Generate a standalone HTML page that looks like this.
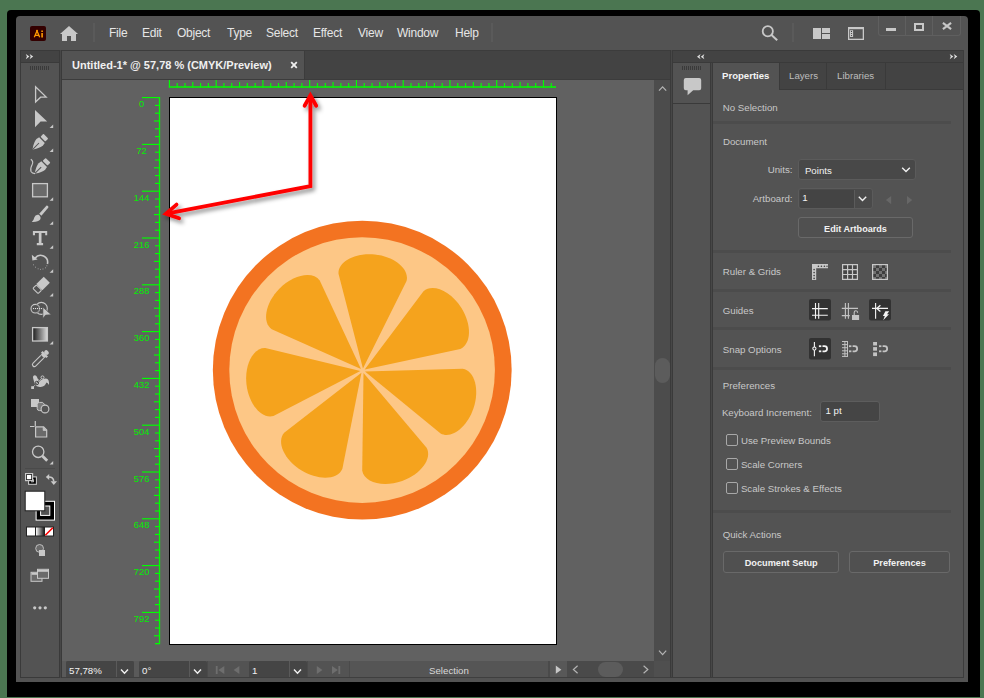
<!DOCTYPE html>
<html><head><meta charset="utf-8">
<style>
*{margin:0;padding:0;box-sizing:border-box}
html,body{width:984px;height:698px;overflow:hidden;background:#4b7651;font-family:"Liberation Sans",sans-serif}
.a{position:absolute}
#frame{left:7px;top:10px;width:973px;height:687px;background:#000;border-radius:4px 4px 0 0}
#win{left:16px;top:16px;width:952px;height:666px;background:#535353;border-radius:4px 4px 0 0;overflow:hidden}
.menu{top:15.8px;height:34px;font-size:12px;letter-spacing:-0.25px;color:#e6e6e6;line-height:34px}
.g{background:#434343}
svg{position:absolute;overflow:visible}
.t{line-height:12px;white-space:nowrap}
</style></head><body>
<div id="frame" class="a"></div>
<div id="win" class="a"></div>

<!-- MENU BAR -->
<div class="a" style="left:30px;top:26px;width:16px;height:15px;background:#330000;border-radius:2px"></div>
<svg style="left:30px;top:26px" width="16" height="15" viewBox="0 0 16 15">
 <path d="M4.3 11.2 L7 5 L9.7 11.2 M4.6 9.3 H9.4" stroke="#ff9a00" stroke-width="1.3" fill="none"/>
 <rect x="11.3" y="7" width="1.6" height="4.5" fill="#ff9a00"/><rect x="11.3" y="4.5" width="1.6" height="1.5" fill="#ff9a00"/><rect x="6.2" y="4" width="1.6" height="1.5" fill="#ff9a00"/>
</svg>
<svg style="left:59px;top:25px" width="20" height="17" viewBox="0 0 20 17">
 <path d="M1 9 L10 1 L19 9 L17 9 L17 16 L12 16 L12 11 L8 11 L8 16 L3 16 L3 9 Z" fill="#c8c8c8"/>
</svg>
<div class="a" style="left:93px;top:23px;width:2px;height:19.4px;background:#5a5a5a"></div>

<!-- menu items -->
<div class="a" style="left:491px;top:23px;width:2px;height:19.4px;background:#5a5a5a"></div>
<div class="a menu" style="left:109px">File</div>
<div class="a menu" style="left:142px">Edit</div>
<div class="a menu" style="left:177px">Object</div>
<div class="a menu" style="left:227px">Type</div>
<div class="a menu" style="left:266px">Select</div>
<div class="a menu" style="left:313px">Effect</div>
<div class="a menu" style="left:358px">View</div>
<div class="a menu" style="left:397px">Window</div>
<div class="a menu" style="left:455px">Help</div>
<!-- right menu icons -->
<svg style="left:760px;top:24px" width="20" height="18" viewBox="0 0 20 18">
 <circle cx="7.8" cy="7.2" r="5.1" stroke="#c8c8c8" stroke-width="1.8" fill="none"/>
 <path d="M11.5 11 L17.2 16.2" stroke="#c8c8c8" stroke-width="2" />
</svg>
<div class="a" style="left:792px;top:23px;width:2px;height:19.4px;background:#5a5a5a"></div>
<div class="a" style="left:813px;top:28px;width:8px;height:11px;background:#c8c8c8"></div>
<div class="a" style="left:822px;top:28px;width:8px;height:4.5px;background:#c8c8c8"></div>
<div class="a" style="left:822px;top:34px;width:8px;height:5px;background:#c8c8c8"></div>
<svg style="left:848px;top:27px" width="16" height="13" viewBox="0 0 16 13">
 <rect x="0.65" y="0.8" width="14.7" height="11.55" stroke="#c8c8c8" stroke-width="1.3" fill="none"/>
 <rect x="0" y="0" width="16" height="2.2" fill="#c8c8c8"/>
 <rect x="2" y="3.2" width="3.1" height="6.8" fill="#c8c8c8"/>
 <circle cx="3.5" cy="4.4" r="0.6" fill="#3a3a3a"/><circle cx="3.5" cy="6.5" r="0.6" fill="#3a3a3a"/><circle cx="3.5" cy="8.5" r="0.6" fill="#3a3a3a"/>
</svg>
<!-- window buttons -->
<div class="a" style="left:878px;top:16px;width:83px;height:20px;border:1px solid #5f5f5f;border-top:none;border-radius:0 0 3px 3px"></div>
<div class="a" style="left:905px;top:16px;width:1px;height:19px;background:#5f5f5f"></div>
<div class="a" style="left:932px;top:16px;width:1px;height:19px;background:#5f5f5f"></div>
<div class="a" style="left:886px;top:28px;width:10px;height:3px;background:#c8c8c8"></div>
<div class="a" style="left:914px;top:23px;width:10px;height:8px;border:2px solid #c8c8c8"></div>
<svg style="left:942px;top:22px" width="10" height="8" viewBox="0 0 10 8">
 <path d="M0.9 0.9 L9.1 7.1 M9.1 0.9 L0.9 7.1" stroke="#c8c8c8" stroke-width="2.1"/>
</svg>

<!-- TOOLBAR PANEL -->
<div class="a" style="left:20px;top:50px;width:42px;height:628px;background:#3a3a3a"></div>
<div class="a" style="left:60px;top:50px;width:1px;height:628px;background:#474747"></div>
<div class="a" style="left:21px;top:51px;width:38px;height:11px;background:#434343"></div>
<div class="a" style="left:21px;top:63px;width:38px;height:614px;background:#535353"></div>


<svg style="left:0;top:0" width="984" height="698" viewBox="0 0 984 698">
 <path d="M25.8 54 L29.400000000000002 56.6 L25.8 59.2 L26.900000000000002 56.6 Z" fill="#e0e0e0"/><path d="M29.6 54 L33.2 56.6 L29.6 59.2 L30.700000000000003 56.6 Z" fill="#e0e0e0"/>
 <g transform="translate(30 66)"><rect x="0" y="0" width="1" height="4" fill="#3a3a3a"/><rect x="2" y="0" width="1" height="4" fill="#3a3a3a"/><rect x="4" y="0" width="1" height="4" fill="#3a3a3a"/><rect x="6" y="0" width="1" height="4" fill="#3a3a3a"/><rect x="8" y="0" width="1" height="4" fill="#3a3a3a"/><rect x="10" y="0" width="1" height="4" fill="#3a3a3a"/><rect x="12" y="0" width="1" height="4" fill="#3a3a3a"/><rect x="14" y="0" width="1" height="4" fill="#3a3a3a"/><rect x="16" y="0" width="1" height="4" fill="#3a3a3a"/><rect x="18" y="0" width="1" height="4" fill="#3a3a3a"/></g>
 <path d="M35.6 86.8 V102 L40.6 97.2 L46.2 97.1 Z" stroke="#c8c8c8" stroke-width="1.3" fill="none" stroke-linejoin="miter"/>
 <path d="M35 110 V127.3 L40.6 121.6 L47.2 121.4 Z" fill="#c8c8c8"/>
 <path d="M53.2 124.4 V128.0 H49.6 Z" fill="#c8c8c8"/>
 <g transform="translate(45.7 136.3) rotate(45)"><rect x="-3.4" y="-0.2" width="6.8" height="4.2" rx="0.8" fill="#c8c8c8"/><path d="M-4 5.3 H4 L4.6 8.5 Q4.3 12.5 0.3 18.2 L-0.3 18.2 Q-4.3 12.5 -4.6 8.5 Z" fill="#c8c8c8"/><path d="M0 9.5 V18" stroke="#535353" stroke-width="1"/></g>
 <path d="M53.2 148.5 V152.1 H49.6 Z" fill="#c8c8c8"/>
 <g transform="translate(47.9 160.4) rotate(45)"><rect x="-3.4" y="-0.2" width="6.8" height="4.2" rx="0.8" fill="#c8c8c8"/><path d="M-4 5.3 H4 L4.6 8.5 Q4.3 12.5 0.3 18.2 L-0.3 18.2 Q-4.3 12.5 -4.6 8.5 Z" fill="#c8c8c8"/><path d="M0 9.5 V18" stroke="#535353" stroke-width="1"/></g>
 <path d="M30.8 159.2 Q33.8 161.5 32.2 164.5 Q30 168.5 31 171.5 Q32 173.6 35 173.6" stroke="#c8c8c8" stroke-width="1.1" fill="none"/>
 <rect x="32.6" y="183.6" width="14.8" height="13.2" fill="#6a6a6a" stroke="#c8c8c8" stroke-width="1.3"/>
 <path d="M53.2 197.2 V200.79999999999998 H49.6 Z" fill="#c8c8c8"/>
 <path d="M46.6 205.6 Q48.8 205.6 48.4 207.6 L41.4 215.8 L39.2 213.8 Z" fill="#c8c8c8"/>
 <path d="M38.8 214.8 Q41.5 217 40.2 219.6 Q38.2 222.2 31.8 221.9 Q34 219.6 34.4 217.2 Q35.4 214 38.8 214.8 Z" fill="#c8c8c8"/>
 <path d="M53.2 221.2 V224.79999999999998 H49.6 Z" fill="#c8c8c8"/>
 <path d="M32.9 230.9 H47.2 V235.2 H45.2 V233 H41.5 V243 H43.1 V245.2 H36.8 V243 H38.8 V233 H35 V235.2 H32.9 Z" fill="#c8c8c8"/>
 <path d="M53.2 245.2 V248.79999999999998 H49.6 Z" fill="#c8c8c8"/>
 <path d="M35 258.2 A7 7 0 0 1 47.4 264" stroke="#c8c8c8" stroke-width="1.6" fill="none"/>
 <path d="M31.8 254.8 L32.4 260.4 L37.6 259.4 Z" fill="#c8c8c8"/>
 <path d="M33.3 264.8 L33.9 264.8 M35.2 267.2 L35.8 267.2 M37.8 268.8 L38.4 268.8 M40.3 269.4 L40.9 269.4 M42.7 269 L43.3 269 M45 267.8 L45.6 267.8 M46.6 265.8 L47.2 265.8" stroke="#c8c8c8" stroke-width="1" fill="none"/>
 <path d="M53.2 269.2 V272.8 H49.6 Z" fill="#c8c8c8"/>
 <g transform="translate(41 285.5) rotate(45)">
  <rect x="-4.3" y="-8.2" width="8.6" height="10.5" fill="#c8c8c8"/>
  <rect x="-3.7" y="2.8" width="7.4" height="5" rx="1" fill="none" stroke="#c8c8c8" stroke-width="1.1"/>
 </g>
 <path d="M53.2 293 V296.6 H49.6 Z" fill="#c8c8c8"/>
 <circle cx="41.3" cy="308.4" r="6" stroke="#c8c8c8" stroke-width="1.1" fill="none"/>
 <circle cx="35.3" cy="308.7" r="4.3" stroke="#c8c8c8" stroke-width="1.1" fill="#535353"/>
 <path d="M36.6 304.6 A4.3 4.3 0 0 1 36.6 312.8" stroke="#8a8a8a" stroke-width="1" fill="none"/>
 <g fill="#e0e0e0"><rect x="33" y="308" width="1.1" height="1.1"/><rect x="35" y="308" width="1.1" height="1.1"/><rect x="37" y="308" width="1.1" height="1.1"/><rect x="39" y="308" width="1.1" height="1.1"/><rect x="41" y="308" width="1.1" height="1.1"/></g>
 <path d="M42.9 307.2 V318.4 L45.6 315.1 L51.2 314.7 Z" fill="#c8c8c8" stroke="#535353" stroke-width="0.6"/>
 <defs><linearGradient id="gr" x1="0" x2="1" y1="0" y2="0"><stop offset="0" stop-color="#1a1a1a"/><stop offset="1" stop-color="#dcdcdc"/></linearGradient>
 <linearGradient id="gr2" x1="0" x2="1" y1="0" y2="0"><stop offset="0" stop-color="#fff"/><stop offset="0.35" stop-color="#aaa"/><stop offset="1" stop-color="#222"/></linearGradient></defs>
 <rect x="32.6" y="327.6" width="14.8" height="13.4" fill="url(#gr)" stroke="#c8c8c8" stroke-width="1.3"/>
 <path d="M53.2 341 V344.6 H49.6 Z" fill="#c8c8c8"/>
 <g transform="translate(40.5 358.5) rotate(45)">
  <rect x="-2.5" y="-10.5" width="5" height="4" rx="2" fill="#c8c8c8"/>
  <rect x="-3.8" y="-6.8" width="7.6" height="2.4" fill="#c8c8c8"/>
  <rect x="-2.4" y="-5" width="4.8" height="2.2" fill="#c8c8c8"/>
  <path d="M-2 -2.5 V8.5 Q-2 10.6 0 10.6 Q2 10.6 2 8.5 V-2.5" stroke="#c8c8c8" stroke-width="1.1" fill="none"/>
 </g>
 <path d="M33.2 378.4 Q32.4 375.4 35 375.2 Q36.8 375.3 37.2 377.6 Q37.6 379.8 39.6 380 Q42 379.6 44.2 378.8 Q47.4 377.6 48.6 380.4 Q49.4 382.6 48.8 385 Q48 382.4 46.4 382.4 Q45 386.4 40.8 386.9 Q36.6 387.3 35 384.8 Q34 381.6 33.2 378.4 Z" fill="#c8c8c8"/>
 <path d="M32.6 387.6 L42.4 377.6" stroke="#535353" stroke-width="1.4"/>
 <path d="M32.6 387.6 L42.4 377.6" stroke="#c8c8c8" stroke-width="0.7"/>
 <circle cx="36.8" cy="383" r="1.75" fill="#c8c8c8" stroke="#3a3a3a" stroke-width="0.9"/>
 <path d="M35.9 383.9 L37.7 382.1" stroke="#3a3a3a" stroke-width="0.8"/>
 <circle cx="42.5" cy="377.4" r="1.5" fill="#535353" stroke="#c8c8c8" stroke-width="1"/>
 <rect x="31.2" y="386.2" width="2.8" height="2.8" fill="#c8c8c8"/>
 <rect x="31" y="399" width="8" height="8" fill="#c8c8c8"/>
 <path d="M37.2 404.5 Q37.2 402.4 39.4 402.4 H42.6 L44.6 404.4 V410.6 H39.6 Q37.2 410.6 37.2 408.4 Z" fill="#7a7a7a" stroke="#c8c8c8" stroke-width="1"/>
 <circle cx="45" cy="409" r="3.9" fill="#535353" stroke="#c8c8c8" stroke-width="1.1"/>
 <path d="M35.3 421 V426 M30 426.5 H34.5" stroke="#c8c8c8" stroke-width="1.2"/>
 <path d="M35.6 426.9 H43.6 L46.7 430 V437 H35.6 Z" fill="#6a6a6a" stroke="#c8c8c8" stroke-width="1.2"/>
 <path d="M43.2 427 V430.4 H46.6" fill="#c8c8c8" stroke="#c8c8c8" stroke-width="0.8"/>
 <circle cx="38.2" cy="451.8" r="5.7" fill="none" stroke="#c8c8c8" stroke-width="1.3"/>
 <path d="M42.4 456 L47.2 460.8" stroke="#c8c8c8" stroke-width="2.8"/>
 <path d="M53.2 461 V464.6 H49.6 Z" fill="#c8c8c8"/>
 <path d="M25 468.5 H55" stroke="#4a4a4a" stroke-width="1"/>
 <rect x="28.6" y="476.9" width="7.8" height="7.4" fill="#000" stroke="#c8c8c8" stroke-width="1.1"/>
 <path d="M33.6 479.3 V481.8 H31" stroke="#fff" stroke-width="0.8" fill="none"/>
 <rect x="25.6" y="473.6" width="7" height="7" fill="#000" stroke="#c8c8c8" stroke-width="1.2"/>
 <rect x="26.9" y="474.9" width="4.4" height="4.4" fill="#fff"/>
 <path d="M48 477 Q53.5 476.5 53.8 481.5" stroke="#c8c8c8" stroke-width="1.6" fill="none"/>
 <path d="M45.8 477 L49.2 473.9 L49.2 480.1 Z" fill="#c8c8c8"/>
 <path d="M50.6 481.2 L57 481.2 L53.8 485 Z" fill="#c8c8c8"/>
 <rect x="36.1" y="501.3" width="18.4" height="18.8" fill="#000" stroke="#fff" stroke-width="1"/>
 <rect x="40.6" y="506" width="9.2" height="9.4" fill="#535353" stroke="#fff" stroke-width="1"/>
 <rect x="25.2" y="491.2" width="19.6" height="19.6" fill="#fff" stroke="#222" stroke-width="1"/>
 <rect x="26" y="526.5" width="28" height="10" fill="#222"/>
 <rect x="27" y="527.5" width="8" height="8" fill="#fff"/>
 <rect x="36" y="527.5" width="8" height="8" fill="url(#gr2)"/>
 <rect x="45" y="527.5" width="8" height="8" fill="#fff"/>
 <path d="M45.3 535.3 L52.8 527.7" stroke="#f00" stroke-width="1.6"/>
 <circle cx="39.6" cy="548.4" r="3.9" fill="#6a6a6a" stroke="#c8c8c8" stroke-width="0.9"/>
 <rect x="39" y="550" width="6" height="6" fill="#c8c8c8"/>
 <rect x="31" y="572.3" width="11" height="9" fill="#6a6a6a" stroke="#c8c8c8" stroke-width="1"/>
 <rect x="31.5" y="572.8" width="10" height="2" fill="#c8c8c8"/>
 <rect x="37.5" y="569.3" width="11" height="9" fill="#6a6a6a" stroke="#c8c8c8" stroke-width="1"/>
 <rect x="38" y="569.8" width="10" height="2" fill="#c8c8c8"/>
 <circle cx="34.7" cy="607.8" r="1.6" fill="#c8c8c8"/><circle cx="40" cy="607.8" r="1.6" fill="#c8c8c8"/><circle cx="45.3" cy="607.8" r="1.6" fill="#c8c8c8"/>
</svg>

<!-- TAB BAR -->
<div class="a" style="left:62px;top:50px;width:610px;height:30px;background:#3c3c3c"></div>
<div class="a" style="left:62px;top:51px;width:242px;height:28px;background:#535353"></div>
<div class="a" style="left:305px;top:51px;width:367px;height:28px;background:#434343"></div>
<div class="a" style="left:72px;top:51px;height:28px;line-height:28px;font-size:11px;font-weight:bold;color:#f0f0f0">Untitled-1* @ 57,78 % (CMYK/Preview)</div>
<svg style="left:290px;top:61px" width="8" height="8" viewBox="0 0 8 8">
 <path d="M1.2 1.2 L6.8 6.8 M6.8 1.2 L1.2 6.8" stroke="#f0f0f0" stroke-width="1.8"/>
</svg>

<!-- CANVAS -->
<div class="a" style="left:62px;top:80px;width:592px;height:581px;background:#616161"></div>
<div class="a" style="left:654px;top:80px;width:16px;height:581px;background:#4c4c4c"></div>
<div class="a" style="left:670px;top:50px;width:3px;height:632px;background:#3c3c3c"></div>
<div class="a" style="left:655px;top:358px;width:15px;height:25px;background:#5c5c5c;border-radius:7.5px"></div>
<!-- artboard -->
<div class="a" style="left:169px;top:97px;width:388px;height:548px;background:#fff;border:1px solid #000"></div>

<svg style="left:0;top:0" width="984" height="698"><path d="M168.8 87 H556" stroke="#00ff00" stroke-width="1.4"/><path d="M169.40 80 V87.5" stroke="#00ff00" stroke-width="1.15"/><path d="M177.19 83 V87.5" stroke="#00ff00" stroke-width="1.15"/><path d="M184.99 83 V87.5" stroke="#00ff00" stroke-width="1.15"/><path d="M192.78 82 V87.5" stroke="#00ff00" stroke-width="1.15"/><path d="M200.57 83 V87.5" stroke="#00ff00" stroke-width="1.15"/><path d="M208.37 83 V87.5" stroke="#00ff00" stroke-width="1.15"/><path d="M216.16 80 V87.5" stroke="#00ff00" stroke-width="1.15"/><path d="M223.95 83 V87.5" stroke="#00ff00" stroke-width="1.15"/><path d="M231.75 83 V87.5" stroke="#00ff00" stroke-width="1.15"/><path d="M239.54 82 V87.5" stroke="#00ff00" stroke-width="1.15"/><path d="M247.33 83 V87.5" stroke="#00ff00" stroke-width="1.15"/><path d="M255.13 83 V87.5" stroke="#00ff00" stroke-width="1.15"/><path d="M262.92 80 V87.5" stroke="#00ff00" stroke-width="1.15"/><path d="M270.71 83 V87.5" stroke="#00ff00" stroke-width="1.15"/><path d="M278.51 83 V87.5" stroke="#00ff00" stroke-width="1.15"/><path d="M286.30 82 V87.5" stroke="#00ff00" stroke-width="1.15"/><path d="M294.09 83 V87.5" stroke="#00ff00" stroke-width="1.15"/><path d="M301.89 83 V87.5" stroke="#00ff00" stroke-width="1.15"/><path d="M309.68 80 V87.5" stroke="#00ff00" stroke-width="1.15"/><path d="M317.47 83 V87.5" stroke="#00ff00" stroke-width="1.15"/><path d="M325.27 83 V87.5" stroke="#00ff00" stroke-width="1.15"/><path d="M333.06 82 V87.5" stroke="#00ff00" stroke-width="1.15"/><path d="M340.85 83 V87.5" stroke="#00ff00" stroke-width="1.15"/><path d="M348.65 83 V87.5" stroke="#00ff00" stroke-width="1.15"/><path d="M356.44 80 V87.5" stroke="#00ff00" stroke-width="1.15"/><path d="M364.23 83 V87.5" stroke="#00ff00" stroke-width="1.15"/><path d="M372.03 83 V87.5" stroke="#00ff00" stroke-width="1.15"/><path d="M379.82 82 V87.5" stroke="#00ff00" stroke-width="1.15"/><path d="M387.61 83 V87.5" stroke="#00ff00" stroke-width="1.15"/><path d="M395.41 83 V87.5" stroke="#00ff00" stroke-width="1.15"/><path d="M403.20 80 V87.5" stroke="#00ff00" stroke-width="1.15"/><path d="M410.99 83 V87.5" stroke="#00ff00" stroke-width="1.15"/><path d="M418.79 83 V87.5" stroke="#00ff00" stroke-width="1.15"/><path d="M426.58 82 V87.5" stroke="#00ff00" stroke-width="1.15"/><path d="M434.37 83 V87.5" stroke="#00ff00" stroke-width="1.15"/><path d="M442.17 83 V87.5" stroke="#00ff00" stroke-width="1.15"/><path d="M449.96 80 V87.5" stroke="#00ff00" stroke-width="1.15"/><path d="M457.75 83 V87.5" stroke="#00ff00" stroke-width="1.15"/><path d="M465.55 83 V87.5" stroke="#00ff00" stroke-width="1.15"/><path d="M473.34 82 V87.5" stroke="#00ff00" stroke-width="1.15"/><path d="M481.13 83 V87.5" stroke="#00ff00" stroke-width="1.15"/><path d="M488.93 83 V87.5" stroke="#00ff00" stroke-width="1.15"/><path d="M496.72 80 V87.5" stroke="#00ff00" stroke-width="1.15"/><path d="M504.51 83 V87.5" stroke="#00ff00" stroke-width="1.15"/><path d="M512.31 83 V87.5" stroke="#00ff00" stroke-width="1.15"/><path d="M520.10 82 V87.5" stroke="#00ff00" stroke-width="1.15"/><path d="M527.89 83 V87.5" stroke="#00ff00" stroke-width="1.15"/><path d="M535.69 83 V87.5" stroke="#00ff00" stroke-width="1.15"/><path d="M543.48 80 V87.5" stroke="#00ff00" stroke-width="1.15"/><path d="M551.27 83 V87.5" stroke="#00ff00" stroke-width="1.15"/><path d="M159.5 97 V644.3" stroke="#00ff00" stroke-width="1.3"/><path d="M142 97.60 H159.5" stroke="#00ff00" stroke-width="1.15"/><path d="M155 105.40 H159.5" stroke="#00ff00" stroke-width="1.15"/><path d="M155 113.20 H159.5" stroke="#00ff00" stroke-width="1.15"/><path d="M154 121.00 H159.5" stroke="#00ff00" stroke-width="1.15"/><path d="M155 128.80 H159.5" stroke="#00ff00" stroke-width="1.15"/><path d="M155 136.60 H159.5" stroke="#00ff00" stroke-width="1.15"/><path d="M142 144.40 H159.5" stroke="#00ff00" stroke-width="1.15"/><path d="M155 152.20 H159.5" stroke="#00ff00" stroke-width="1.15"/><path d="M155 160.00 H159.5" stroke="#00ff00" stroke-width="1.15"/><path d="M154 167.80 H159.5" stroke="#00ff00" stroke-width="1.15"/><path d="M155 175.60 H159.5" stroke="#00ff00" stroke-width="1.15"/><path d="M155 183.40 H159.5" stroke="#00ff00" stroke-width="1.15"/><path d="M142 191.20 H159.5" stroke="#00ff00" stroke-width="1.15"/><path d="M155 199.00 H159.5" stroke="#00ff00" stroke-width="1.15"/><path d="M155 206.80 H159.5" stroke="#00ff00" stroke-width="1.15"/><path d="M154 214.60 H159.5" stroke="#00ff00" stroke-width="1.15"/><path d="M155 222.40 H159.5" stroke="#00ff00" stroke-width="1.15"/><path d="M155 230.20 H159.5" stroke="#00ff00" stroke-width="1.15"/><path d="M142 238.00 H159.5" stroke="#00ff00" stroke-width="1.15"/><path d="M155 245.80 H159.5" stroke="#00ff00" stroke-width="1.15"/><path d="M155 253.60 H159.5" stroke="#00ff00" stroke-width="1.15"/><path d="M154 261.40 H159.5" stroke="#00ff00" stroke-width="1.15"/><path d="M155 269.20 H159.5" stroke="#00ff00" stroke-width="1.15"/><path d="M155 277.00 H159.5" stroke="#00ff00" stroke-width="1.15"/><path d="M142 284.80 H159.5" stroke="#00ff00" stroke-width="1.15"/><path d="M155 292.60 H159.5" stroke="#00ff00" stroke-width="1.15"/><path d="M155 300.40 H159.5" stroke="#00ff00" stroke-width="1.15"/><path d="M154 308.20 H159.5" stroke="#00ff00" stroke-width="1.15"/><path d="M155 316.00 H159.5" stroke="#00ff00" stroke-width="1.15"/><path d="M155 323.80 H159.5" stroke="#00ff00" stroke-width="1.15"/><path d="M142 331.60 H159.5" stroke="#00ff00" stroke-width="1.15"/><path d="M155 339.40 H159.5" stroke="#00ff00" stroke-width="1.15"/><path d="M155 347.20 H159.5" stroke="#00ff00" stroke-width="1.15"/><path d="M154 355.00 H159.5" stroke="#00ff00" stroke-width="1.15"/><path d="M155 362.80 H159.5" stroke="#00ff00" stroke-width="1.15"/><path d="M155 370.60 H159.5" stroke="#00ff00" stroke-width="1.15"/><path d="M142 378.40 H159.5" stroke="#00ff00" stroke-width="1.15"/><path d="M155 386.20 H159.5" stroke="#00ff00" stroke-width="1.15"/><path d="M155 394.00 H159.5" stroke="#00ff00" stroke-width="1.15"/><path d="M154 401.80 H159.5" stroke="#00ff00" stroke-width="1.15"/><path d="M155 409.60 H159.5" stroke="#00ff00" stroke-width="1.15"/><path d="M155 417.40 H159.5" stroke="#00ff00" stroke-width="1.15"/><path d="M142 425.20 H159.5" stroke="#00ff00" stroke-width="1.15"/><path d="M155 433.00 H159.5" stroke="#00ff00" stroke-width="1.15"/><path d="M155 440.80 H159.5" stroke="#00ff00" stroke-width="1.15"/><path d="M154 448.60 H159.5" stroke="#00ff00" stroke-width="1.15"/><path d="M155 456.40 H159.5" stroke="#00ff00" stroke-width="1.15"/><path d="M155 464.20 H159.5" stroke="#00ff00" stroke-width="1.15"/><path d="M142 472.00 H159.5" stroke="#00ff00" stroke-width="1.15"/><path d="M155 479.80 H159.5" stroke="#00ff00" stroke-width="1.15"/><path d="M155 487.60 H159.5" stroke="#00ff00" stroke-width="1.15"/><path d="M154 495.40 H159.5" stroke="#00ff00" stroke-width="1.15"/><path d="M155 503.20 H159.5" stroke="#00ff00" stroke-width="1.15"/><path d="M155 511.00 H159.5" stroke="#00ff00" stroke-width="1.15"/><path d="M142 518.80 H159.5" stroke="#00ff00" stroke-width="1.15"/><path d="M155 526.60 H159.5" stroke="#00ff00" stroke-width="1.15"/><path d="M155 534.40 H159.5" stroke="#00ff00" stroke-width="1.15"/><path d="M154 542.20 H159.5" stroke="#00ff00" stroke-width="1.15"/><path d="M155 550.00 H159.5" stroke="#00ff00" stroke-width="1.15"/><path d="M155 557.80 H159.5" stroke="#00ff00" stroke-width="1.15"/><path d="M142 565.60 H159.5" stroke="#00ff00" stroke-width="1.15"/><path d="M155 573.40 H159.5" stroke="#00ff00" stroke-width="1.15"/><path d="M155 581.20 H159.5" stroke="#00ff00" stroke-width="1.15"/><path d="M154 589.00 H159.5" stroke="#00ff00" stroke-width="1.15"/><path d="M155 596.80 H159.5" stroke="#00ff00" stroke-width="1.15"/><path d="M155 604.60 H159.5" stroke="#00ff00" stroke-width="1.15"/><path d="M142 612.40 H159.5" stroke="#00ff00" stroke-width="1.15"/><path d="M155 620.20 H159.5" stroke="#00ff00" stroke-width="1.15"/><path d="M155 628.00 H159.5" stroke="#00ff00" stroke-width="1.15"/><path d="M154 635.80 H159.5" stroke="#00ff00" stroke-width="1.15"/><path d="M155 643.60 H159.5" stroke="#00ff00" stroke-width="1.15"/><path d="M155 643.6 H159.5" stroke="#00ff00" stroke-width="1.15"/><g fill="#00f000" font-size="9.3" font-family="Liberation Sans"><text x="141.6" y="107.20" text-anchor="middle">0</text><text x="141.6" y="154.00" text-anchor="middle">72</text><text x="141.6" y="200.80" text-anchor="middle">144</text><text x="141.6" y="247.60" text-anchor="middle">216</text><text x="141.6" y="294.40" text-anchor="middle">288</text><text x="141.6" y="341.20" text-anchor="middle">360</text><text x="141.6" y="388.00" text-anchor="middle">432</text><text x="141.6" y="434.80" text-anchor="middle">504</text><text x="141.6" y="481.60" text-anchor="middle">576</text><text x="141.6" y="528.40" text-anchor="middle">648</text><text x="141.6" y="575.20" text-anchor="middle">720</text><text x="141.6" y="622.00" text-anchor="middle">792</text></g></svg>
<svg style="left:0;top:0" width="984" height="698">
<circle cx="362.25" cy="370.1" r="149.4" fill="#f37321"/>
<circle cx="362.1" cy="370.1" r="132.8" fill="#fdc786"/>
<g transform="translate(362.7 370.8)" fill="#f5a31d"><path d="M0 -2.4 L-34.2 -94 C-36.2 -106 -20 -117 0 -117 C20 -117 36.2 -106 34.2 -94 Z" transform="rotate(6.000)"/><path d="M0 -2.4 L-34.2 -94 C-36.2 -106 -20 -117 0 -117 C20 -117 36.2 -106 34.2 -94 Z" transform="rotate(57.429)"/><path d="M0 -2.4 L-34.2 -94 C-36.2 -106 -20 -117 0 -117 C20 -117 36.2 -106 34.2 -94 Z" transform="rotate(108.857)"/><path d="M0 -2.4 L-34.2 -94 C-36.2 -106 -20 -117 0 -117 C20 -117 36.2 -106 34.2 -94 Z" transform="rotate(160.286)"/><path d="M0 -2.4 L-34.2 -94 C-36.2 -106 -20 -117 0 -117 C20 -117 36.2 -106 34.2 -94 Z" transform="rotate(211.714)"/><path d="M0 -2.4 L-34.2 -94 C-36.2 -106 -20 -117 0 -117 C20 -117 36.2 -106 34.2 -94 Z" transform="rotate(263.143)"/><path d="M0 -2.4 L-34.2 -94 C-36.2 -106 -20 -117 0 -117 C20 -117 36.2 -106 34.2 -94 Z" transform="rotate(314.571)"/></g>
</svg>
<svg style="left:0;top:0" width="984" height="698">
<defs><filter id="sh" x="-20%" y="-20%" width="140%" height="140%"><feDropShadow dx="2.5" dy="3" stdDeviation="2.2" flood-color="#000" flood-opacity="0.45"/></filter></defs>
<g filter="url(#sh)" stroke="#ff0000" stroke-width="3.8" fill="none" stroke-linecap="round" stroke-linejoin="miter">
<path d="M310.4 96 V186.2 L166.5 213.6"/>
<path d="M304.6 105.8 L310.4 95.4 L316.2 105.8"/>
<path d="M176.5 204.6 L165.9 213.7 L179.1 218.3"/>
</g>
</svg>
<!-- STATUS BAR -->
<div class="a" style="left:62px;top:661px;width:608px;height:21px;background:#535353"></div>
<div class="a" style="left:62px;top:677px;width:608px;height:1px;background:#3f3f3f"></div>
<div class="a" style="left:62px;top:661px;width:4px;height:16px;background:#5a5a5a"></div>
<div class="a" style="left:66px;top:661px;width:68px;height:16px;background:#454545;border-radius:2px 2px 0 0"></div>
<div class="a" style="left:116px;top:661px;width:1px;height:16px;background:#5a5a5a"></div>
<div class="a" style="left:134px;top:661px;width:5px;height:16px;background:#5a5a5a"></div>
<div class="a" style="left:139px;top:661px;width:68px;height:16px;background:#454545;border-radius:2px 2px 0 0"></div>
<div class="a" style="left:189px;top:661px;width:1px;height:16px;background:#5a5a5a"></div>
<div class="a" style="left:207px;top:661px;width:42px;height:16px;background:#535353;border-left:1px solid #4a4a4a"></div>
<div class="a" style="left:249px;top:661px;width:58px;height:16px;background:#454545;border-radius:2px 2px 0 0"></div>
<div class="a" style="left:289px;top:661px;width:1px;height:16px;background:#5a5a5a"></div>
<div class="a" style="left:307px;top:661px;width:42px;height:16px;background:#535353;border-left:1px solid #4a4a4a"></div>
<div class="a" style="left:349px;top:661px;width:199px;height:16px;background:#555555;border-left:1px solid #4a4a4a"></div>
<div class="a" style="left:548px;top:661px;width:2px;height:16px;background:#4a4a4a"></div>
<div class="a" style="left:550px;top:661px;width:17px;height:16px;background:#585858"></div>
<div class="a" style="left:567px;top:661px;width:87px;height:16px;background:#4a4a4a"></div>
<div class="a" style="left:598px;top:661.5px;width:25px;height:15px;background:#5c5c5c;border-radius:8px"></div>
<div class="a" style="left:654px;top:661px;width:16px;height:16px;background:#4f4f4f"></div>
<div class="a st" style="left:69px;top:663px;font-size:9.7px;color:#f2f2f2;line-height:15px">57,78%</div>
<div class="a st" style="left:142px;top:663px;font-size:9.7px;color:#f2f2f2;line-height:15px">0°</div>
<div class="a st" style="left:252px;top:663px;font-size:9.7px;color:#f2f2f2;line-height:15px">1</div>
<div class="a st" style="left:429px;top:663px;font-size:9.7px;color:#d8d8d8;line-height:15px">Selection</div>
<svg style="left:0;top:0" width="984" height="698">
 <g stroke="#f0f0f0" stroke-width="1.5" fill="none">
  <path d="M121 669.6 L124.5 673.2 L128 669.6"/>
  <path d="M194 669.6 L197.5 673.2 L201 669.6"/>
  <path d="M294 669.6 L297.5 673.2 L301 669.6"/>
 </g>
 <g fill="#6e6e6e">
  <rect x="215.8" y="666" width="1.8" height="8"/><path d="M224.3 666 V674 L218.4 670 Z"/>
  <path d="M239.4 666 V674 L233.6 670 Z"/>
  <path d="M316.8 666 V674 L322.4 670 Z"/>
  <path d="M332 666 V674 L337.8 670 Z"/><rect x="338.4" y="666" width="1.8" height="8"/>
 </g>
 <path d="M555.8 665.6 V673.8 L561.4 669.7 Z" fill="#c8c8c8"/>
 <g stroke="#b4b4b4" stroke-width="1.2" fill="none">
  <path d="M577.6 665.8 L573.4 669.5 L577.6 673.2"/>
  <path d="M643.6 665.8 L647.8 669.5 L643.6 673.2"/>
  <path d="M659 650.6 L662.6 654.6 L666.2 650.6"/>
  <path d="M659 90.6 L662.6 86.8 L666.2 90.6"/>
 </g>
</svg>
<!-- RIGHT DOCK -->
<div class="a" style="left:670px;top:50px;width:298px;height:628px;background:#3a3a3a"></div>
<div class="a" style="left:671px;top:50px;width:1px;height:628px;background:#474747"></div>
<div class="a" style="left:711px;top:63px;width:1px;height:615px;background:#474747"></div>
<div class="a" style="left:673px;top:51px;width:290px;height:11px;background:#434343"></div>
<div class="a" style="left:963px;top:50px;width:5px;height:632px;background:#535353;border-left:1px solid #3c3c3c"></div>
<div class="a" style="left:673px;top:63px;width:37px;height:40px;background:#535353"></div>
<div class="a" style="left:673px;top:104px;width:37px;height:573px;background:#535353"></div>
<div class="a" style="left:670px;top:677px;width:294px;height:1px;background:#3c3c3c"></div>
<div class="a" style="left:670px;top:678px;width:298px;height:4px;background:#535353"></div>
<div class="a" style="left:713px;top:63px;width:250px;height:614px;background:#535353"></div>
<div class="a" style="left:779px;top:63px;width:184px;height:26px;background:#434343"></div>
<div class="a" style="left:779px;top:63px;width:1px;height:26px;background:#3a3a3a"></div>
<div class="a" style="left:826px;top:63px;width:1px;height:26px;background:#3a3a3a"></div>
<div class="a" style="left:885px;top:63px;width:1px;height:26px;background:#3a3a3a"></div>
<div class="a" style="left:779px;top:89px;width:184px;height:1px;background:#3a3a3a"></div>
<svg style="left:0;top:0" width="984" height="698">
 <path d="M700.6 54.1 L697.0 56.7 L700.6 59.300000000000004 L699.5 56.7 Z" fill="#e0e0e0"/><path d="M704.4 54.1 L700.8 56.7 L704.4 59.300000000000004 L703.3 56.7 Z" fill="#e0e0e0"/>
 <path d="M949.7 54 L953.3000000000001 56.6 L949.7 59.2 L950.8000000000001 56.6 Z" fill="#e0e0e0"/><path d="M953.7 54 L957.3000000000001 56.6 L953.7 59.2 L954.8000000000001 56.6 Z" fill="#e0e0e0"/>
 <g fill="#3a3a3a"><rect x="682" y="66" width="1" height="4"/><rect x="684" y="66" width="1" height="4"/><rect x="686" y="66" width="1" height="4"/><rect x="688" y="66" width="1" height="4"/><rect x="690" y="66" width="1" height="4"/><rect x="692" y="66" width="1" height="4"/><rect x="694" y="66" width="1" height="4"/><rect x="696" y="66" width="1" height="4"/><rect x="698" y="66" width="1" height="4"/><rect x="700" y="66" width="1" height="4"/></g>
 <path d="M685.8 78 H699.2 Q701.2 78 701.2 80 V88.2 Q701.2 90.2 699.2 90.2 H693.2 L687.6 95.2 V90.2 H685.8 Q683.8 90.2 683.8 88.2 V80 Q683.8 78 685.8 78 Z" fill="#c8c8c8"/>
</svg>
<div class="a lb" style="left:722px;top:63px;height:26px;line-height:25px;font-size:9.6px;font-weight:bold;color:#f4f4f4">Properties</div>
<div class="a lb" style="left:789px;top:63px;height:26px;line-height:25px;font-size:9.7px;color:#bdbdbd">Layers</div>
<div class="a lb" style="left:837px;top:63px;height:26px;line-height:25px;font-size:9.7px;color:#bdbdbd">Libraries</div>
<div class="a t" style="left:722.8px;top:101.6px;font-size:9.7px;color:#c8c8c8;">No Selection</div>
<div class="a" style="left:713px;top:121px;width:238px;height:3px;background:#4c4c4c"></div>
<div class="a t" style="left:722.9px;top:136.4px;font-size:9.7px;color:#c8c8c8;">Document</div>
<div class="a t" style="right:191.5px;top:164.2px;font-size:9.7px;color:#c8c8c8;">Units:</div>
<div class="a t" style="right:191.5px;top:193.4px;font-size:9.7px;color:#c8c8c8;">Artboard:</div>
<div class="a" style="left:798px;top:159px;width:118px;height:21px;background:#484848;border:1.5px solid #5b5b5b;border-radius:3px"></div>
<div class="a t" style="left:804.9px;top:164.8px;font-size:9.7px;color:#f2f2f2;">Points</div>
<div class="a" style="left:798px;top:188px;width:75px;height:21px;background:#4a4a4a;border:1.5px solid #5b5b5b;border-radius:3px"></div>
<div class="a" style="left:799.5px;top:189.5px;width:54.5px;height:18px;background:#444444;border-radius:2px 0 0 2px"></div>
<div class="a" style="left:854px;top:189.5px;width:1px;height:18px;background:#5b5b5b"></div>
<div class="a t" style="left:802.3px;top:192.4px;font-size:9.7px;color:#f2f2f2;">1</div>
<div class="a" style="left:798px;top:217px;width:115px;height:21px;background:#505050;border:1.5px solid #696969;border-radius:3px"></div>
<div class="a t" style="left:755.5px;width:200px;text-align:center;top:222.5px;font-size:9.1px;color:#f2f2f2;font-weight:bold;">Edit Artboards</div>
<div class="a" style="left:713px;top:250px;width:238px;height:3px;background:#4c4c4c"></div>
<div class="a t" style="left:722.8px;top:266.3px;font-size:9.7px;color:#c8c8c8;">Ruler &amp; Grids</div>
<div class="a" style="left:713px;top:289px;width:238px;height:3px;background:#4c4c4c"></div>
<div class="a t" style="left:722.8px;top:305.4px;font-size:9.7px;color:#c8c8c8;">Guides</div>
<div class="a" style="left:713px;top:327px;width:238px;height:3px;background:#4c4c4c"></div>
<div class="a t" style="left:722.8px;top:344.0px;font-size:9.7px;color:#c8c8c8;">Snap Options</div>
<div class="a" style="left:713px;top:367px;width:238px;height:3px;background:#4c4c4c"></div>
<div class="a t" style="left:722.8px;top:379.9px;font-size:9.7px;color:#c8c8c8;">Preferences</div>
<div class="a t" style="left:721.9px;top:406.6px;font-size:9.7px;color:#c8c8c8;">Keyboard Increment:</div>
<div class="a" style="left:819.5px;top:400.8px;width:60.5px;height:21px;background:#454545;border:1.5px solid #5d5d5d;border-radius:3px"></div>
<div class="a t" style="left:825.5px;top:405.2px;font-size:9.7px;color:#f2f2f2;">1 pt</div>
<div class="a" style="left:726px;top:434px;width:12px;height:12px;border:1.2px solid #a8a8a8;border-radius:2px"></div>
<div class="a t" style="left:740.9px;top:434.8px;font-size:9.7px;color:#c8c8c8;">Use Preview Bounds</div>
<div class="a" style="left:726px;top:458px;width:12px;height:12px;border:1.2px solid #a8a8a8;border-radius:2px"></div>
<div class="a t" style="left:740.9px;top:458.8px;font-size:9.7px;color:#c8c8c8;">Scale Corners</div>
<div class="a" style="left:726px;top:482px;width:12px;height:12px;border:1.2px solid #a8a8a8;border-radius:2px"></div>
<div class="a t" style="left:740.9px;top:482.8px;font-size:9.7px;color:#c8c8c8;">Scale Strokes &amp; Effects</div>
<div class="a" style="left:713px;top:510px;width:238px;height:3px;background:#4c4c4c"></div>
<div class="a t" style="left:722.7px;top:529.1px;font-size:9.7px;color:#c8c8c8;">Quick Actions</div>
<div class="a" style="left:723px;top:551px;width:116px;height:22px;background:#505050;border:1.5px solid #696969;border-radius:3px"></div>
<div class="a" style="left:849px;top:551px;width:101px;height:22px;background:#505050;border:1.5px solid #696969;border-radius:3px"></div>
<div class="a t" style="left:681.2px;width:200px;text-align:center;top:556.9px;font-size:9.2px;color:#f2f2f2;font-weight:bold;">Document Setup</div>
<div class="a t" style="left:799.5px;width:200px;text-align:center;top:556.9px;font-size:9.2px;color:#f2f2f2;font-weight:bold;">Preferences</div>
<svg style="left:0;top:0" width="984" height="698">
 <g stroke="#f0f0f0" stroke-width="1.4" fill="none">
  <path d="M902.2 167.8 L906 171.6 L909.8 167.8"/>
  <path d="M858.8 196.8 L862.5 200.4 L866.2 196.8"/>
 </g>
 <path d="M891.2 196 V204.2 L885.9 200.1 Z M907 196 V204.2 L912.2 200.1 Z" fill="#676767"/>
 <!-- ruler icon -->
 <path d="M812 264 H828 V268.2 H816.2 V280 H812 Z" fill="#c8c8c8"/>
 <g fill="#3a3a3a"><circle cx="818.4" cy="266.2" r="0.8"/><circle cx="821.4" cy="266.2" r="0.8"/><circle cx="824.4" cy="266.2" r="0.8"/><circle cx="827" cy="266.2" r="0.7"/>
 <circle cx="814.1" cy="269.6" r="0.8"/><circle cx="814.1" cy="272.6" r="0.8"/><circle cx="814.1" cy="275.6" r="0.8"/><circle cx="814.1" cy="278.4" r="0.8"/></g>
 <!-- grid -->
 <rect x="842" y="264" width="16" height="16" fill="#454545"/>
 <path d="M842.6 264.6 H857.4 V279.4 H842.6 Z M847.6 264.6 V279.4 M852.5 264.6 V279.4 M842.6 269.6 H857.4 M842.6 274.5 H857.4" stroke="#c8c8c8" stroke-width="1.2" fill="none"/>
 <!-- transparency -->
 <defs><pattern id="chk" x="873" y="265" width="6" height="6" patternUnits="userSpaceOnUse"><rect width="6" height="6" fill="#3e3e3e"/><rect width="3" height="3" fill="#727272"/><rect x="3" y="3" width="3" height="3" fill="#727272"/></pattern></defs>
 <rect x="872.6" y="264.6" width="14.8" height="14.8" fill="url(#chk)" stroke="#c8c8c8" stroke-width="1.2"/>
 <!-- guides -->
 <rect x="809" y="299" width="22" height="21.6" rx="2" fill="#323232"/>
 <rect x="869" y="299" width="22" height="21.6" rx="2" fill="#323232"/>
 <g stroke="#f4f4f4" stroke-width="1.1" fill="none">
  <path d="M815.5 303 V318.8 M818.7 303 V318.8 M812 308.6 H827.8 M812 315.3 H827.8"/>
  <path d="M875.6 303 V318.8 M872 308.4 H888"/>
  <path d="M880.4 305.2 L876.8 308.4 L880.4 311.6" stroke-width="1.3"/>
 </g>
 <path d="M885.4 311.3 H889.2 L887 314.3 H889 L883.2 320.2 L884.8 315.9 H882.9 Z" fill="#f4f4f4"/>
 <g stroke="#c3c3c3" stroke-width="1.1" fill="none">
  <path d="M845.4 303 V318.8 M848.4 303 V318.8 M841.8 308.4 H858 M841.8 315.6 H849.8"/>
  <path d="M854.2 315 V312.6 Q854.2 310.8 855.9 310.8 Q857.6 310.8 857.6 312.8"/>
 </g>
 <rect x="852" y="315" width="7.1" height="5" fill="#c3c3c3"/>
 <!-- snap -->
 <rect x="809" y="338" width="22" height="21.4" rx="2" fill="#323232"/>
 <g stroke="#f4f4f4" stroke-width="1.1" fill="none">
  <path d="M814.4 342 V356.2"/><circle cx="814.4" cy="348.6" r="1.6" fill="#323232"/>
 </g>
 <path d="M822.5 346.2 H824.5 A2.55 2.55 0 0 1 824.5 351.3 H822.5" stroke="#f4f4f4" stroke-width="1.8" fill="none"/><rect x="818.9" y="345.3" width="2.4" height="1.8" fill="#f4f4f4"/><rect x="818.9" y="350.4" width="2.4" height="1.8" fill="#f4f4f4"/>
 <g stroke="#c3c3c3" stroke-width="1" fill="none">
  <path d="M847.5 341 V356.8 M844.9 341 V356.8 M842 341.5 H848 M842 344.6 H848 M842 347.7 H848 M842 350.8 H848 M842 353.8 H848 M842 356.4 H848"/>
 </g>
 <path d="M852.6 346.2 H854.6 A2.55 2.55 0 0 1 854.6 351.3 H852.6" stroke="#c3c3c3" stroke-width="1.8" fill="none"/><rect x="849" y="345.3" width="2.4" height="1.8" fill="#c3c3c3"/><rect x="849" y="350.4" width="2.4" height="1.8" fill="#c3c3c3"/>
 <g fill="#c3c3c3"><rect x="873.1" y="342" width="3.9" height="3.5"/><rect x="873.1" y="347.1" width="3.9" height="3.6"/><rect x="873.1" y="352.4" width="3.9" height="3.7"/></g>
 <path d="M882.6 346.2 H884.6 A2.55 2.55 0 0 1 884.6 351.3 H882.6" stroke="#c3c3c3" stroke-width="1.8" fill="none"/><rect x="879" y="345.3" width="2.4" height="1.8" fill="#c3c3c3"/><rect x="879" y="350.4" width="2.4" height="1.8" fill="#c3c3c3"/>
</svg>
</body></html>
